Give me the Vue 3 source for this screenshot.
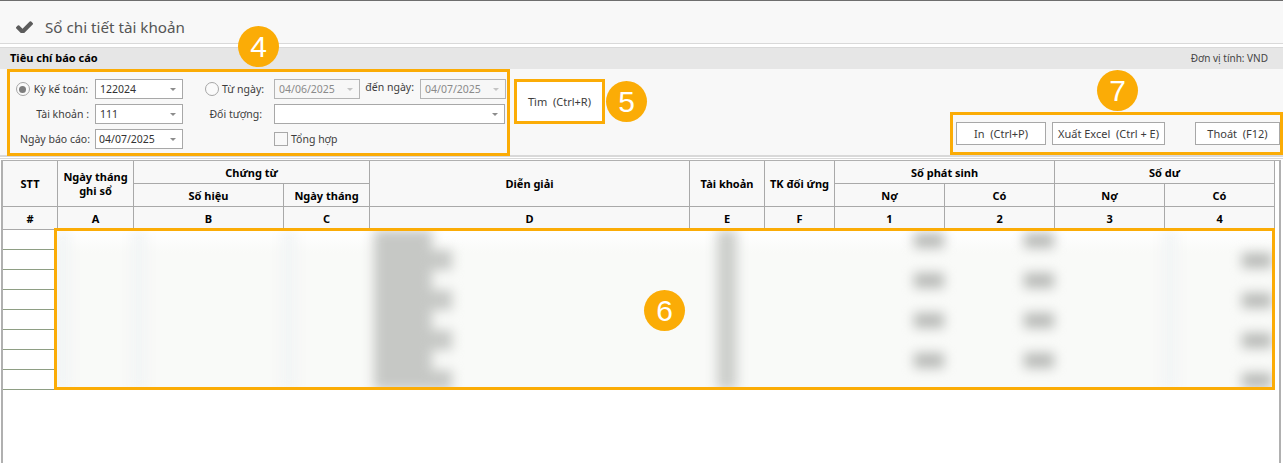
<script setup>
const badges = [
  { n: 4, cls: 'b4' },
  { n: 5, cls: 'b5' },
  { n: 6, cls: 'b6' },
  { n: 7, cls: 'b7' }
]
const marks = ['m4', 'm5', 'm7']
const rowCount = 8
</script>

<template>
  <div class="page">
    <header class="title">
      <svg class="check" viewBox="121 330 1550 1056" aria-hidden="true">
        <path d="M1671 566q0 40-28 68l-724 724-136 136q-28 28-68 28t-68-28l-136-136-362-362q-28-28-28-68t28-68l136-136q28-28 68-28t68 28l294 295 656-657q28-28 68-28t68 28l136 136q28 28 28 68z" />
      </svg>
      <h1>Sổ chi tiết tài khoản</h1>
    </header>

    <div class="bar">
      <strong>Tiêu chí báo cáo</strong>
      <span>Đơn vị tính: VND</span>
    </div>

    <section class="filters">
      <div class="form">
        <label class="lbl radio-lbl"><i class="radio on"></i>Kỳ kế toán:</label>
        <div class="combo"><span>122024</span><b></b></div>
        <span></span>
        <label class="lbl radio-lbl second"><i class="radio"></i>Từ ngày:</label>
        <div class="combo off"><span>04/06/2025</span><b></b></div>
        <label class="lbl until">đến ngày:</label>
        <div class="combo off"><span>04/07/2025</span><b></b></div>

        <label class="lbl mid">Tài khoản :</label>
        <div class="combo"><span>111</span><b></b></div>
        <span></span>
        <label class="lbl subject">Đối tượng:</label>
        <div class="combo wide"><span></span><b></b></div>

        <label class="lbl">Ngày báo cáo:</label>
        <div class="combo date"><span>04/07/2025</span><b></b></div>
        <span></span>
        <span></span>
        <label class="total"><i class="box"></i>Tổng hợp</label>
      </div>

      <button class="find">Tìm&nbsp; (Ctrl+R)</button>

      <div class="actions">
        <button class="print">In&nbsp; (Ctrl+P)</button>
        <button class="excel">Xuất Excel&nbsp; (Ctrl + E)</button>
        <button class="quit">Thoát&nbsp; (F12)</button>
      </div>
    </section>

    <div class="sep"></div>

    <div class="grid-wrap">
      <table>
        <colgroup>
          <col class="w55" /><col class="w76" /><col class="w150" /><col class="w86" /><col class="w320" />
          <col class="w75" /><col class="w70" /><col class="w110" /><col class="w110" /><col class="w110" /><col class="w110" />
        </colgroup>
        <thead>
          <tr>
            <th rowspan="2">STT</th>
            <th rowspan="2">Ngày tháng<br />ghi sổ</th>
            <th colspan="2">Chứng từ</th>
            <th rowspan="2">Diễn giải</th>
            <th rowspan="2">Tài khoản</th>
            <th rowspan="2">TK đối ứng</th>
            <th colspan="2">Số phát sinh</th>
            <th colspan="2">Số dư</th>
          </tr>
          <tr>
            <th>Số hiệu</th><th>Ngày tháng</th><th>Nợ</th><th>Có</th><th>Nợ</th><th>Có</th>
          </tr>
          <tr>
            <th>#</th><th>A</th><th>B</th><th>C</th><th>D</th><th>E</th><th>F</th><th>1</th><th>2</th><th>3</th><th>4</th>
          </tr>
        </thead>
        <tbody>
          <tr v-for="r in rowCount" :key="r">
            <td v-for="c in 11" :key="c"></td>
          </tr>
        </tbody>
      </table>
    </div>

    <!-- Annotations and the masked data lie over the screen -->
    <div class="mask">
      <div class="smear">
        <div v-for="r in rowCount" :key="r" class="smear-row">
          <span class="faint"></span>
          <span class="faint"></span>
          <span class="faint"></span>
          <span class="cell-d"><i :class="r % 2 ? 'narrow' : 'wide'"></i></span>
          <span class="cell-e"><i></i></span>
          <span></span>
          <span class="num"><i v-if="r % 2"></i></span>
          <span class="num"><i v-if="r % 2"></i></span>
          <span></span>
          <span class="num faint"><i v-if="!(r % 2)"></i></span>
        </div>
      </div>
    </div>
    <div v-for="m in marks" :key="m" class="mark" :class="m"></div>
    <div v-for="b in badges" :key="b.n" class="badge" :class="b.cls">{{ b.n }}</div>
  </div>
</template>

<style>
html, body { margin: 0; background: #fff; overflow: hidden; }
</style>

<style scoped>
.page {
  position: relative;
  display: flex;
  flex-direction: column;
  height: 463px;
  overflow: hidden;
  font-family: "Noto Sans", "Liberation Sans", sans-serif;
  font-size: 11px;
  color: #3c3c3c;
  background: #fff;
}

.title {
  display: flex;
  align-items: center;
  gap: 12px;
  box-sizing: border-box;
  height: 44px;
  padding: 9px 0 0 16px;
  background: #f8f8f8;
  border-top: 1px solid #6e6e6e;
  border-bottom: 1px solid #d9d9d9;
}
.check { width: 17px; height: 12px; fill: #5c5c5c; }
.title h1 { margin: 0; font-size: 15.2px; font-weight: 400; color: #555; }

.bar {
  display: flex;
  justify-content: space-between;
  align-items: center;
  box-sizing: border-box;
  height: 22px;
  margin-top: 3px;
  padding: 0 15px 2px 10px;
  background: #e6e6e6;
  border-top: 1px solid #d9d9d9;
  color: #000;
}
.bar strong { font-size: 11px; font-weight: 700; }
.bar span { font-size: 10px; color: #444; }

.filters {
  display: flex;
  box-sizing: border-box;
  height: 88px;
  background: #f8f8f8;
  border-bottom: 2px solid #d9d9d9;
}
.form {
  display: grid;
  grid-template-columns: 85px 88px 22px 69px 86px 60px 86px;
  grid-template-rows: 20px 20px 20px;
  row-gap: 5px;
  padding: 10px 0 0 10px;
  align-items: center;
  font-size: 10.5px;
}
.lbl {
  display: flex;
  align-items: center;
  justify-content: flex-end;
  padding-right: 5px;
  white-space: nowrap;
}
.lbl.mid { padding-right: 6px; }
.radio-lbl { padding-right: 7px; }
.radio-lbl.second { justify-content: flex-start; padding: 0; }
.radio-lbl.second .radio { margin-right: 3px; }
.until { padding: 0 6px 4px 0; }
.subject { grid-column: 4; padding-right: 12px; }
.radio {
  box-sizing: border-box;
  display: flex;
  align-items: center;
  justify-content: center;
  flex: none;
  width: 14px;
  height: 14px;
  margin-right: 4px;
  border: 1px solid #a6a6a6;
  border-radius: 50%;
  background: #fafafa;
}
.radio.on::after {
  content: "";
  width: 7px;
  height: 7px;
  border-radius: 50%;
  background: #7d7d7d;
}
.combo {
  position: relative;
  box-sizing: border-box;
  height: 20px;
  display: flex;
  align-items: center;
  padding: 0 4px;
  background: #fff;
  border: 1px solid #a8a8a8;
  color: #333;
  white-space: nowrap;
}
.combo.date { padding-left: 3px; }
.combo.wide { grid-column: 5 / 8; margin-right: 1px; }
.combo.off { background: #f7f7f7; color: #8a8a8a; border-color: #b4b4b4; }
.combo b {
  position: absolute;
  right: 6px;
  top: 8px;
  border: 3px solid transparent;
  border-top-color: #8c8c8c;
  border-bottom: 0;
}
.combo.off b { border-top-color: #c4c4c4; }
.total {
  display: flex;
  align-items: center;
  grid-column: 5 / 8;
  gap: 3px;
}
.box {
  box-sizing: border-box;
  width: 14px;
  height: 14px;
  border: 1px solid #a8a8a8;
  background: #f8f8f8;
}

button {
  box-sizing: border-box;
  margin: 0;
  padding: 0;
  font: inherit;
  color: #3c3c3c;
  background: #fff;
  border: 1px solid #a8a8a8;
  white-space: nowrap;
}
.find {
  width: 89px;
  height: 44px;
  margin: 10px 0 0 9px;
  border: 0;
}
.actions {
  display: flex;
  margin: 53px 3px 0 auto;
  height: 23px;
}
.print { width: 90px; margin-right: 6px; }
.excel { width: 113px; margin-right: 30px; }
.quit { width: 85px; }

.sep {
  height: 1px;
  margin-top: 1px;
  background: #d9d9d9;
}
.grid-wrap {
  flex: 1;
  box-sizing: border-box;
  width: 1280px;
  margin: 1px 0 0 1px;
  border: solid #b0b0b0;
  border-width: 1px 2px 0 2px;
  overflow: hidden;
}
table {
  width: 1272px;
  table-layout: fixed;
  border-collapse: separate;
  border-spacing: 0;
}
.w55 { width: 55px; } .w76 { width: 76px; } .w150 { width: 150px; } .w86 { width: 86px; }
.w320 { width: 320px; } .w75 { width: 75px; } .w70 { width: 70px; } .w110 { width: 110px; }
th {
  box-sizing: border-box;
  height: 23px;
  padding: 1px 0 0;
  font-size: 11px;
  font-weight: 700;
  line-height: 14px;
  color: #000;
  text-align: center;
  background: #f8f8f8;
  border-right: 1px solid #a9a9a9;
  border-bottom: 1px solid #a9a9a9;
}
td {
  box-sizing: border-box;
  height: 20px;
  padding: 0;
  border-bottom: 1px solid #8e9e84;
}

.mask {
  position: absolute;
  left: 57px;
  top: 231px;
  width: 1215px;
  height: 156px;
  overflow: hidden;
  background: linear-gradient(#fff, #f9faf8 22px);
}
.smear {
  display: flex;
  flex-direction: column;
  margin-top: -1px;
  filter: blur(6px);
}
.smear-row {
  display: grid;
  grid-template-columns: 76px 150px 86px 320px 75px 70px 110px 110px 110px 108px;
  height: 20px;
}
.smear-row span { display: flex; align-items: center; height: 20px; }
.smear-row i { display: block; }
.faint { border-left: 12px solid #f1f4f5; }
.cell-d i { height: 20px; margin-left: 5px; background: #c6c8c5; }
.cell-d i.narrow { width: 58px; }
.cell-d i.wide { width: 78px; }
.cell-e i { width: 20px; height: 20px; margin-left: 28px; background: #cccecb; }
.num { justify-content: flex-end; }
.num i { width: 30px; height: 15px; background: #b8bab7; }

.mark {
  position: absolute;
  box-sizing: border-box;
  border: 3px solid #fbac06;
}
.m4 { left: 7px; top: 69px; width: 503px; height: 87px; }
.m5 { left: 514px; top: 79px; width: 91px; height: 45px; }
.m7 { left: 950px; top: 112px; width: 333px; height: 43px; }
.page::after {
  content: "";
  position: absolute;
  left: 54px;
  top: 228px;
  width: 1221px;
  height: 162px;
  box-sizing: border-box;
  border: 3px solid #fbac06;
}
.badge {
  position: absolute;
  z-index: 2;
  width: 41px;
  height: 41px;
  border-radius: 50%;
  background: #fbac06;
  color: #fff;
  font-family: "Liberation Sans", sans-serif;
  font-size: 30px;
  line-height: 41px;
  text-align: center;
}
.b4 { left: 238px; top: 26px; }
.b5 { left: 606px; top: 81px; }
.b6 { left: 644px; top: 290px; }
.b7 { left: 1097px; top: 70px; }
</style>
